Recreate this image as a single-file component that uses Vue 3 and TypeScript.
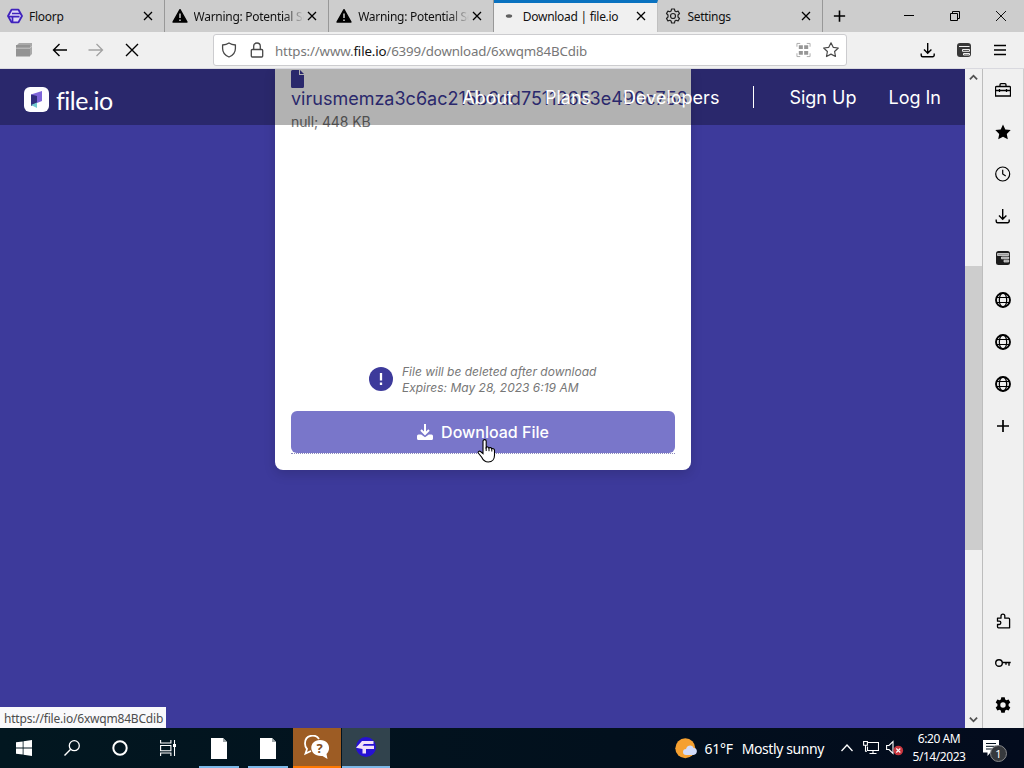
<script setup lang="ts">
import { ref } from "vue";

interface Tab {
  title: string;
  icon: string;
  active?: boolean;
  faded?: boolean;
}

const tabs = ref<Tab[]>([
  { title: "Floorp", icon: "floorp" },
  { title: "Warning: Potential Security", icon: "warning", faded: true },
  { title: "Warning: Potential Security", icon: "warning", faded: true },
  { title: "Download | file.io", icon: "loading", active: true },
  { title: "Settings", icon: "gear-line" },
]);

const SIDEBAR_TOP = ["toolbox", "star-full", "clock", "download", "notes", "globe", "globe", "globe", "plus"];
const SIDEBAR_BOTTOM = ["puzzle", "key", "gear-full"];

const file = {
  name: "virusmemza3c6ac215b6dd75112653e490c758",
  meta: "null; 448 KB",
};
</script>

<template>
  <div class="screen">
    <svg class="sprite" aria-hidden="true">
      <symbol id="floorp" viewBox="0 0 16 16">
        <path d="M4.500 1.700h7L15 8l-3.500 6.300h-7L1 8z" fill="#ded8f4" stroke="#4023bd" stroke-width="1.800" stroke-linejoin="round" />
        <path d="M5 5.500h8.500M2 8.700h10.500M5.500 9v5" fill="none" stroke="#4023bd" stroke-width="1.700" />
      </symbol>
      <symbol id="warning" viewBox="0 0 16 16">
        <path d="M8 1.700 15 14H1z" fill="#000" stroke="#000" stroke-width="1.400" stroke-linejoin="round" />
        <path d="M8 5.500v4.500M8 11.500v1.500" stroke="#ddd" stroke-width="1.400" />
      </symbol>
      <symbol id="loading" viewBox="0 0 16 16">
        <ellipse cx="8" cy="8" rx="3.200" ry="1.800" fill="#606060" />
      </symbol>
      <symbol id="gear-line" viewBox="0 0 16 16">
        <path
          d="M6.600 1h2.800l.5 2 1.200.7 2-.6 1.400 2.400L13 7v2l1.500 1.500-1.400 2.400-2-.6-1.200.7-.5 2H6.600l-.5-2-1.200-.7-2 .6-1.400-2.400L3 9V7L1.500 5.500l1.400-2.400 2 .6L6.100 3z"
          fill="none" stroke="#222" stroke-width="1.200" stroke-linejoin="round"
        />
        <circle cx="8" cy="8" r="2.500" fill="none" stroke="#222" stroke-width="1.200" />
      </symbol>
      <symbol id="gear-full" viewBox="0 0 16 16">
        <path
          fill-rule="evenodd"
          d="M6.300.3h3.400l.5 2.200 1.200.7 2.200-.7 1.700 3L13.600 7v2l1.700 1.500-1.700 3-2.200-.7-1.200.7-.5 2.200H6.300l-.5-2.200-1.200-.7-2.200.7-1.700-3L2.400 9V7L.7 5.500l1.700-3 2.200.7 1.200-.7zM8 5.300a2.700 2.700 0 1 0 0 5.400 2.700 2.700 0 0 0 0-5.400z"
        />
      </symbol>
      <symbol id="close" viewBox="0 0 16 16">
        <path d="m4 4 8 8M12 4l-8 8" stroke="currentColor" stroke-width="1.300" />
      </symbol>
      <symbol id="plus" viewBox="0 0 16 16">
        <path d="M8 2v12M2 8h12" stroke="#000" stroke-width="1.700" />
      </symbol>
      <symbol id="toolbox" viewBox="0 0 16 16">
        <path
          d="M1.500 4.500h13a1 1 0 0 1 1 1V14H.5V5.500a1 1 0 0 1 1-1zM5 4.500V2.700a1 1 0 0 1 1-1h4a1 1 0 0 1 1 1v1.800M.5 8.500h15M4.500 7v3M11.500 7v3"
          fill="none" stroke="#000" stroke-width="1.300"
        />
      </symbol>
      <symbol id="star-full" viewBox="0 0 16 16">
        <path d="m8 .5 2.300 4.900 5.400.7-3.900 3.800 1 5.300L8 12.700l-4.800 2.500 1-5.300L.3 6.100l5.400-.7z" />
      </symbol>
      <symbol id="star-line" viewBox="0 0 16 16">
        <path
          d="m8 .8 2.200 4.500 5.100.7-3.700 3.500.9 5L8 12.100l-4.500 2.400.9-5L.7 6l5.100-.7z"
          fill="none" stroke="#4a4a4a" stroke-width="1.200" stroke-linejoin="round"
        />
      </symbol>
      <symbol id="clock" viewBox="0 0 16 16">
        <circle cx="7.700" cy="8" r="7" fill="none" stroke="#000" stroke-width="1.200" />
        <path d="M7.700 3.800V8l3 2" fill="none" stroke="#000" stroke-width="1.200" />
      </symbol>
      <symbol id="download" viewBox="0 0 16 16">
        <path
          d="M7.700 1v10M4 7.500l3.700 3.700 3.700-3.700M1.200 11.500v1.800a1.500 1.500 0 0 0 1.500 1.500h10a1.500 1.500 0 0 0 1.500-1.500v-1.800"
          fill="none" stroke="#000" stroke-width="1.400"
        />
      </symbol>
      <symbol id="notes" viewBox="0 0 16 16">
        <rect x="1" y="1" width="14" height="14" rx="2.500" fill="#1c1c1c" />
        <path d="M2.500 3.500h11.200v2H2.500zM6.500 7h7.200v1.800H6.500zM9 10.200h4.700V12H9z" fill="#999" stroke="#eee" stroke-width=".7" />
      </symbol>
      <symbol id="panel" viewBox="0 0 16 16">
        <rect x="1" y="1" width="14" height="14" rx="3" fill="#383838" />
        <path d="M3 4.500h10.500M6.500 7.500h7v1.800h-7zM7.500 11.500h6v1.500h-6z" fill="none" stroke="#f0f0f0" stroke-width="1" />
      </symbol>
      <symbol id="globe" viewBox="0 0 16 16">
        <g fill="none" stroke="#000">
          <circle cx="8" cy="8" r="7" stroke-width="1.900" />
          <ellipse cx="8" cy="8" rx="3.700" ry="7" stroke-width="1.200" />
          <path d="M1.500 5.500h13M1.500 10.500h13" stroke-width="1.200" />
        </g>
      </symbol>
      <symbol id="puzzle" viewBox="0 0 16 16">
        <path
          d="M2.500 5.200H6V3a1.900 1.900 0 0 1 3.800 0v2.200h3.800a1 1 0 0 1 1 1v8.600H3.500a1 1 0 0 1-1-1v-2.300h1.700a1.600 1.600 0 0 0 0-3.300H2.500z"
          fill="none" stroke="#000" stroke-width="1.300" stroke-linejoin="round"
        />
      </symbol>
      <symbol id="key" viewBox="0 0 16 16">
        <path d="M7.400 7.500h8.300M14 7.500v3.300M11 7.500v2.300" stroke="#000" stroke-width="1.400" />
        <circle cx="4" cy="8" r="3.300" fill="none" stroke="#000" stroke-width="1.400" />
      </symbol>
    </svg>

    <header class="tab-bar">
      <div v-for="(tab, i) in tabs" :key="i" class="tab" :class="{ active: tab.active }">
        <svg class="tab-icon"><use :href="`#${tab.icon}`" /></svg>
        <span class="tab-title" :class="{ faded: tab.faded }">{{ tab.title }}</span>
        <svg class="tab-close"><use href="#close" /></svg>
      </div>
      <svg class="new-tab"><use href="#plus" /></svg>
      <div class="window-buttons">
        <svg viewBox="0 0 12 12"><path d="M1 5.500h10" stroke="#000" /></svg>
        <svg viewBox="0 0 12 12">
          <path d="M1.500 3.500h7v7h-7zM3.500 3.500v-2h7v7h-2" fill="none" stroke="#000" />
        </svg>
        <svg viewBox="0 0 12 12"><path d="m1 1 10 10M11 1 1 11" stroke="#111" /></svg>
      </div>
    </header>

    <div class="toolbar">
      <svg class="tool workspaces" viewBox="0 0 16 16">
        <path d="M3 1h13v11l-2 2V3H1z" fill="#a9a9a9" />
        <path d="M0 3h14v11.500H0z" fill="#939393" />
        <path d="M0 6.200h14l2-2" fill="none" stroke="#c9c9c9" />
      </svg>
      <svg class="tool" viewBox="0 0 16 16">
        <path d="M15 8H1.500M7.500 2 1.500 8l6 6" fill="none" stroke="#000" stroke-width="1.400" />
      </svg>
      <svg class="tool" viewBox="0 0 16 16">
        <path d="M.5 8h14M8.500 2l6 6-6 6" fill="none" stroke="#a2a2a2" stroke-width="1.300" />
      </svg>
      <svg class="tool" viewBox="0 0 16 16">
        <path d="m2 2 12 12M14 2 2 14" stroke="#000" stroke-width="1.400" />
      </svg>
      <div class="url-bar">
        <svg class="shield" viewBox="0 0 16 16">
          <path
            d="M8 1c2 1.400 4.300 1.900 6.400 2v3.500c0 4-2.700 7-6.400 8.500-3.700-1.500-6.400-4.500-6.400-8.500V3C3.700 2.900 6 2.400 8 1z"
            fill="none" stroke="#484848" stroke-width="1.300"
          />
        </svg>
        <svg class="lock" viewBox="0 0 16 16">
          <path
            d="M3.300 7.500h9.400a1 1 0 0 1 1 1V14a1 1 0 0 1-1 1H3.300a1 1 0 0 1-1-1V8.500a1 1 0 0 1 1-1zM4.700 7.500V4.300a3.300 3.300 0 0 1 6.600 0v3.200"
            fill="none" stroke="#484848" stroke-width="1.300"
          />
        </svg>
        <span class="url">https://www.<b>file.io</b>/6399/download/6xwqm84BCdib</span>
        <svg class="qr" viewBox="0 0 16 16">
          <path d="M1 4.500V1h3.500M11.500 1H15v3.500M15 11.500V15h-3.500M4.500 15H1v-3.500" fill="none" stroke="#aaa" />
          <path d="M3 3h4.300v4H3zM8.700 3H13v4H8.700zM3 9h4.300v4H3zM8.700 9H13v4H8.700z" fill="#969696" />
        </svg>
        <svg class="bookmark"><use href="#star-line" /></svg>
      </div>
      <div class="toolbar-end">
        <svg class="tool"><use href="#download" /></svg>
        <svg class="tool"><use href="#panel" /></svg>
        <svg class="tool" viewBox="0 0 16 16">
          <path d="M2 3.500h12M2 8h12M2 12.500h12" stroke="#000" stroke-width="1.400" />
        </svg>
      </div>
    </div>

    <div class="browser-body">
      <main class="page">
        <nav class="site-header">
          <svg class="logo" viewBox="0 0 25 25">
            <rect width="25" height="25" rx="6" fill="#fdfdff" />
            <path d="M7 7.500 18 4v10l-5 2z" fill="#7d64d8" />
            <path d="m7 7.500 6 1.500v7l-6 3z" fill="#302c7c" />
            <path d="m7 18 6-2.500V21z" fill="#72c9cf" />
          </svg>
          <span class="brand">file.io</span>
          <div class="nav-links">
            <a class="about">About</a>
            <a class="plans">Plans</a>
            <a class="developers">Developers</a>
            <i class="divider"></i>
            <a class="sign-up">Sign Up</a>
            <a>Log In</a>
          </div>
        </nav>
        <section class="card">
          <div class="file-info">
            <svg class="file-icon" viewBox="0 0 13 18">
              <path d="M0 1.500A1.500 1.500 0 0 1 1.500 0H8v5h5v11.500a1.500 1.500 0 0 1-1.500 1.500h-10A1.500 1.500 0 0 1 0 16.500zM9 0l4 4H9z" fill="#3d3a9b" />
            </svg>
            <div class="file-name">{{ file.name }}</div>
            <div class="file-meta">{{ file.meta }}</div>
          </div>
          <div class="notice">
            <svg class="notice-icon" viewBox="0 0 24 24">
              <circle cx="12" cy="12" r="12" fill="#3d3a9b" />
              <path d="M12 6v7.500M12 15.500V18" stroke="#fff" stroke-width="2.300" />
            </svg>
            <p>File will be deleted after download<br />Expires: May 28, 2023 6:19 AM</p>
          </div>
          <button class="download-button">
            <svg viewBox="0 0 16 16">
              <path d="M8 0v9M4 6l4 4 4-4" fill="none" stroke="#fff" stroke-width="2" />
              <path d="M1.500 10.500h2.700L8 13.300l3.800-2.800h2.700A1.500 1.500 0 0 1 16 12v2.500a1.500 1.500 0 0 1-1.500 1.500h-13A1.500 1.500 0 0 1 0 14.500V12a1.500 1.500 0 0 1 1.500-1.500z" fill="#fff" />
            </svg>
            Download File
          </button>
          <div class="focus-line"></div>
        </section>
        <div class="status">https://file.io/6xwqm84BCdib</div>
        <svg class="cursor" viewBox="0 0 19 24">
          <path
            d="M6 2.200a1.600 1.600 0 0 1 3.200 0V8.500c.5-.9 2.500-.8 2.800.5.600-.8 2.500-.5 2.700.8.900-.6 2.800-.1 2.800 1.400v5c0 3.500-2 6.800-6.200 6.800-4 0-5.300-2-6.600-4.800L1.300 14c-.6-1.400 1-2.400 2.200-1.500L6 14.600z"
            fill="#fff" stroke="#000" stroke-width="1.100"
          />
          <path d="M9.200 8v4M12 9v3.200M14.800 10v2.500" stroke="#000" />
        </svg>
      </main>
      <div class="scrollbar">
        <svg viewBox="0 0 10 10"><path d="m1 7 4-4 4 4" fill="none" stroke="#505050" stroke-width="2" /></svg>
        <div class="track"><div class="thumb"></div></div>
        <svg viewBox="0 0 10 10"><path d="m1 3 4 4 4-4" fill="none" stroke="#505050" stroke-width="2" /></svg>
      </div>
      <aside class="sidebar">
        <div v-for="(icon, i) in SIDEBAR_TOP" :key="i" class="sidebar-item">
          <svg><use :href="`#${icon}`" /></svg>
        </div>
        <div class="spacer"></div>
        <div v-for="icon in SIDEBAR_BOTTOM" :key="icon" class="sidebar-item">
          <svg><use :href="`#${icon}`" /></svg>
        </div>
      </aside>
    </div>

    <footer class="taskbar">
      <div class="task">
        <svg viewBox="0 0 16 16">
          <path d="M0 2.300 6.700 1.400v6.200H0zM7.500 1.300 16 0v7.600H7.500zM0 8.400h6.700v6.200L0 13.700zM7.500 8.400H16V16l-8.500-1.200z" fill="#fff" />
        </svg>
      </div>
      <div class="task">
        <svg viewBox="0 0 16 16">
          <circle cx="10.300" cy="5.700" r="5" fill="none" stroke="#fff" stroke-width="1.300" />
          <path d="M6.700 9.300.5 15.500" stroke="#fff" stroke-width="1.400" />
        </svg>
      </div>
      <div class="task">
        <svg viewBox="0 0 16 16"><circle cx="8" cy="8" r="6.700" fill="none" stroke="#fff" stroke-width="2" /></svg>
      </div>
      <div class="task">
        <svg viewBox="0 0 16 16">
          <path d="M.6 0v3h10.300V0M.6 5.500h10.300v5.200H.6zM.6 16v-3h10.300v3M14.500 0v16" fill="none" stroke="#fff" stroke-width="1.100" />
          <path d="M13 4h3v3h-3z" fill="#fff" />
        </svg>
      </div>
      <div class="running">
        <div v-for="n in 2" :key="n" class="task open">
          <svg class="doc" viewBox="0 0 16 21">
            <path d="M0 0h12l4 4v17H0z" fill="#fff" />
            <path d="M12 0v4h4z" fill="#a0a7a9" />
          </svg>
        </div>
      </div>
      <div class="task alert">
        <svg class="chat" viewBox="0 0 26 25">
          <path d="M15 4C12-1 1-1 1 8.500c0 3 1 4.500 2 5.500l-1.500 4.500L7 16" fill="none" stroke="#fff" stroke-width="1.800" />
          <path d="M16 5c10 0 11 10 6.500 14l1 5-5-3C4 22 4 5 16 5z" fill="#fff" />
          <text x="12.500" y="18">?</text>
        </svg>
      </div>
      <div class="task current">
        <svg class="floorp-task" viewBox="0 0 22 22">
          <circle cx="11" cy="11" r="10" fill="#2611d4" />
          <path d="M7 5h11.500v3H9L7.500 9.800H19V13h-8v4.500H7.500V13L1 11.800z" fill="#f2dff7" />
        </svg>
      </div>
      <div class="tray">
        <svg class="weather" viewBox="0 0 22 21">
          <circle cx="10.300" cy="10.300" r="10" fill="#f5a030" />
          <path d="M11 17a3 3 0 0 1 0-6c1-4.500 7-4.500 7.500-1 4.500-.5 4.500 7 0 7z" fill="#d2dcfa" />
        </svg>
        <span class="temperature">61°F</span>
        <span class="forecast">Mostly sunny</span>
        <svg class="chevron" viewBox="0 0 14 14"><path d="m1.500 10 5.500-6 5.500 6" fill="none" stroke="#fff" stroke-width="1.300" /></svg>
        <svg class="network" viewBox="0 0 16 16">
          <path d="M5 2.500h10.500v8H4.500V6.500M10 10.500v3M6.500 13.500h7M.6 1.500h3.800v3.800H.6zM2.500 5.300v6H4" fill="none" stroke="#fff" stroke-width="1.100" />
        </svg>
        <svg class="volume" viewBox="0 0 18 16">
          <path d="M.6 5.500H3L7 1.500v12L3 9.500H.6z" fill="none" stroke="#fff" stroke-width="1.100" />
          <circle cx="12.300" cy="10.500" r="4.800" fill="#c9363e" />
          <path d="m10.300 8.500 4 4M14.300 8.500l-4 4" stroke="#fff" stroke-width="1.100" />
        </svg>
        <div class="date-time"><span>6:20 AM</span><span class="date">5/14/2023</span></div>
        <div class="notifications">
          <svg viewBox="0 0 16 16">
            <path d="M0 0h16v12.500H7.500L4.500 16v-3.500H0z" fill="#fff" />
            <path d="M3 3.500h10M3 6.300h10M3 9h7" stroke="#02101d" />
          </svg>
          <span class="badge">1</span>
        </div>
      </div>
    </footer>
  </div>
</template>

<style>
body {
  margin: 0;
  overflow: hidden;
}
</style>

<style scoped>
.screen {
  width: 1024px;
  height: 768px;
  display: flex;
  flex-direction: column;
  overflow: hidden;
  font-family: "Noto Sans", "Open Sans", sans-serif;
  font-size: 12px;
}

svg {
  display: block;
  width: 16px;
  height: 16px;
  flex-shrink: 0;
}

.sprite {
  position: absolute;
  width: 0;
  height: 0;
}

.tab-bar {
  display: flex;
  height: 32px;
  background: #cdcdcd;
  align-items: center;
}

.tab {
  box-sizing: border-box;
  display: flex;
  align-items: center;
  width: 164.600px;
  height: 32px;
  padding: 0 8px 0 7px;
  border-right: 1px solid #989898;
}

.tab.active {
  background: #f0f0f0;
  border-top: 3px solid #0a72c0;
  border-right-color: #c0c0c0;
  padding-bottom: 3px;
}

.tab-title {
  flex: 1;
  margin-left: 6px;
  overflow: hidden;
  white-space: nowrap;
  color: #111;
  letter-spacing: -0.28px;
}

.tab-title.faded {
  -webkit-mask-image: linear-gradient(to right, #000 82%, transparent);
  mask-image: linear-gradient(to right, #000 82%, transparent);
}

.new-tab {
  margin-left: 9px;
  width: 15px;
}

.window-buttons {
  display: flex;
  gap: 34px;
  margin-left: auto;
  margin-right: 17px;
}

.window-buttons svg {
  width: 12px;
  height: 12px;
}

.toolbar {
  display: flex;
  align-items: center;
  height: 37px;
  box-sizing: border-box;
  padding-left: 16px;
  background: #f0f0f0;
  border-bottom: 1px solid #d9d9df;
  gap: 20px;
}

.url-bar {
  box-sizing: border-box;
  display: flex;
  align-items: center;
  width: 634px;
  height: 32px;
  margin-left: 53px;
  padding: 0 7px;
  border: 1px solid #cccccf;
  border-radius: 3px;
  background: #fff;
}

.lock {
  margin-left: 12px;
}

.url {
  margin-left: 10px;
  padding-top: 2px;
  color: #777;
  font-size: 13.300px;
  letter-spacing: -0.15px;
}

.url b {
  color: #111;
  font-weight: normal;
}

.qr {
  width: 15px;
  margin-left: auto;
}

.bookmark {
  margin-left: 12px;
}

.toolbar-end {
  display: flex;
  gap: 20px;
  margin-left: auto;
  margin-right: 16px;
}

.browser-body {
  display: flex;
  height: 659px;
}

.page {
  position: relative;
  width: 965px;
  background: #3d3a9b;
  font-family: Inter, sans-serif;
  overflow: hidden;
}

.site-header {
  position: absolute;
  z-index: 2;
  top: 0;
  left: 0;
  right: 0;
  display: flex;
  align-items: center;
  box-sizing: border-box;
  height: 56px;
  padding: 0 24px;
  background: rgba(0, 0, 0, 0.3);
  color: #fff;
}

.logo {
  width: 25px;
  height: 25px;
  margin-top: 4px;
}

.brand {
  margin: 6px 0 0 7px;
  font-family: Lato, sans-serif;
  font-size: 25px;
  letter-spacing: -0.45px;
}

.nav-links {
  display: flex;
  align-items: center;
  margin-left: auto;
  font-size: 18px;
}

.about,
.plans {
  margin-right: 32px;
}

.divider {
  width: 1px;
  height: 22px;
  margin: 0 35px 0 34px;
  background: #fff;
}

.sign-up {
  margin-right: 32px;
}

.card {
  box-sizing: border-box;
  display: flex;
  flex-direction: column;
  width: 416px;
  height: 401px;
  margin-left: 275px;
  padding: 1px 16px 16px;
  border-radius: 0 0 8px 8px;
  background: #fff;
  overflow: hidden;
  box-shadow: 0 4px 12px rgba(0, 0, 0, 0.15);
}

.file-info {
  flex: 1;
}

.file-icon {
  width: 13px;
  height: 18px;
}

.file-name {
  margin-top: -1px;
  color: #3d3a9b;
  font-size: 18px;
  line-height: 24px;
  white-space: nowrap;
}

.file-meta {
  color: #707070;
  font-size: 14px;
  line-height: 22px;
  letter-spacing: -0.1px;
}

.notice {
  display: flex;
  align-items: center;
  gap: 9px;
  margin: 0 0 15px 78px;
  color: #777;
  font-size: 12px;
  font-style: italic;
  line-height: 16px;
}

.notice p {
  margin: 0;
  white-space: nowrap;
}

.notice-icon {
  width: 24px;
  height: 24px;
  margin-bottom: 2px;
}

.download-button {
  display: flex;
  align-items: center;
  justify-content: center;
  gap: 8px;
  flex-shrink: 0;
  height: 42px;
  border: none;
  border-radius: 6px;
  background: #7976ca;
  color: #fff;
  font-family: Inter, sans-serif;
  font-size: 16px;
  font-weight: 500;
}

.focus-line {
  border-bottom: 1px dotted #8b89bd;
}

.status {
  position: absolute;
  left: 0;
  bottom: 0;
  box-sizing: border-box;
  width: 166px;
  height: 21px;
  padding-left: 4px;
  background: #f9f9fb;
  color: #4c4c4c;
  font-family: "Noto Sans", sans-serif;
  font-size: 12px;
  line-height: 23px;
  letter-spacing: -0.2px;
  white-space: nowrap;
}

.cursor {
  position: absolute;
  left: 477px;
  top: 370px;
  width: 19px;
  height: 24px;
}

.scrollbar {
  display: flex;
  flex-direction: column;
  align-items: center;
  width: 17px;
  background: #f0f0f0;
}

.scrollbar svg {
  width: 9px;
  height: 17px;
}

.track {
  flex: 1;
  width: 100%;
}

.thumb {
  height: 284px;
  margin-top: 180px;
  background: #cdcdcd;
}

.sidebar {
  box-sizing: border-box;
  display: flex;
  flex-direction: column;
  width: 42px;
  padding-bottom: 2px;
  border-left: 1px solid #bdbdbd;
  border-right: 1px solid #cfcfcf;
  background: #f0f0f0;
}

.sidebar-item {
  display: grid;
  place-items: center;
  height: 42px;
}

.spacer {
  flex: 1;
}

.taskbar {
  display: flex;
  height: 40px;
  background: linear-gradient(to right, #021720, #02101d 60%, #030b1d);
  color: #fff;
}

.task {
  box-sizing: border-box;
  display: grid;
  place-items: center;
  width: 48px;
  height: 40px;
}

.running {
  display: flex;
  gap: 9px;
  margin: 0 5px 0 7px;
}

.task.open {
  width: 40px;
  border-bottom: 2px solid #7cb8e8;
}

.doc {
  width: 16px;
  height: 21px;
  margin-top: 2px;
}

.task.alert {
  background: #9d5c24;
  border-bottom: 2px solid #ff7800;
}

.chat {
  width: 26px;
  height: 25px;
}

.chat text {
  fill: #814b20;
  font-size: 13px;
  font-weight: bold;
}

.task.current {
  margin-left: 1px;
  background: #31434d;
  border-bottom: 2px solid #7cb8e8;
}

.floorp-task {
  width: 22px;
  height: 22px;
}

.tray {
  display: flex;
  align-items: center;
  flex: 1;
  justify-content: flex-end;
  padding-right: 19px;
}

.weather {
  width: 22px;
  height: 21px;
}

.temperature {
  margin-left: 8px;
}

.forecast {
  margin-left: 9px;
  letter-spacing: -0.4px;
}

.temperature,
.forecast {
  padding-top: 1px;
  font-size: 14px;
}

.temperature {
  letter-spacing: -0.3px;
}

.chevron {
  width: 14px;
  height: 14px;
  margin-left: 16px;
}

.network {
  margin-left: 9px;
}

.volume {
  width: 18px;
  margin-left: 7px;
}

.date-time {
  display: flex;
  flex-direction: column;
  align-items: center;
  width: 54px;
  margin-left: 8px;
  font-size: 12px;
  line-height: 18px;
  white-space: nowrap;
  letter-spacing: -0.45px;
}

.notifications {
  position: relative;
  width: 22px;
  height: 24px;
  margin-left: 17px;
}

.notifications svg {
  margin-top: 4px;
}

.badge {
  position: absolute;
  left: 7px;
  top: 9px;
  width: 15px;
  height: 15px;
  border: 1px solid #86878a;
  border-radius: 50%;
  background: #36393d;
  font-size: 11px;
  line-height: 15px;
  text-align: center;
}
</style>
